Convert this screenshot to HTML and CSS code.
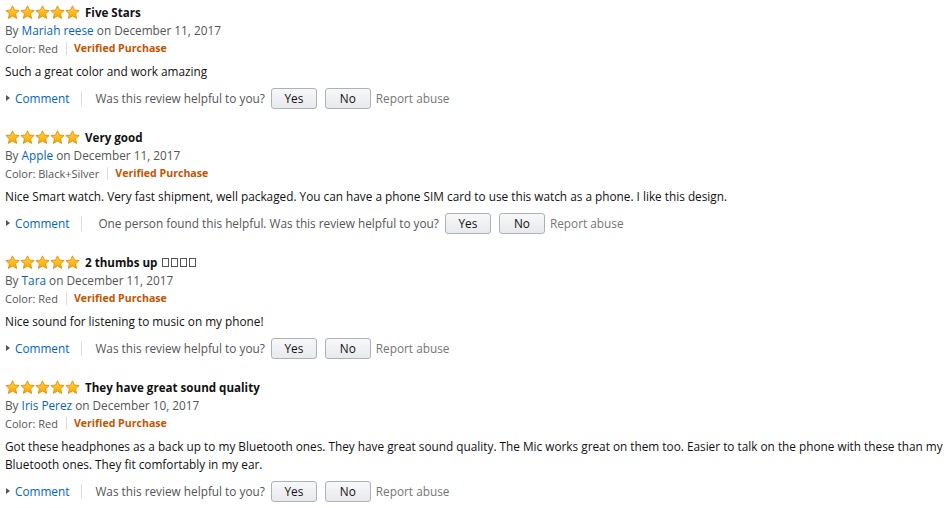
FILE: index.html
```html
<!DOCTYPE html>
<html>
<head>
<meta charset="utf-8">
<link rel="stylesheet" href="styles.css">
</head>
<body>
<svg width="0" height="0" class="defs">
  <defs>
    <linearGradient id="sg" x1="0" y1="0" x2="0" y2="1">
      <stop offset="0" stop-color="#ffd54a"/>
      <stop offset="1" stop-color="#f7a600"/>
    </linearGradient>
    <symbol id="star" viewBox="0 0 16 16">
      <path d="M8 0.9 L10.1 5.4 L15.1 5.9 L11.3 9.3 L12.4 14.3 L8 11.7 L3.6 14.3 L4.7 9.3 L0.9 5.9 L5.9 5.4 Z" fill="url(#sg)" stroke="#e28a00" stroke-width="0.9" stroke-linejoin="round"/>
    </symbol>
  </defs>
</svg>
<div class="reviews">

  <div class="review">
    <div class="title-row">
      <span class="stars"><svg><use href="#star"/></svg><svg><use href="#star"/></svg><svg><use href="#star"/></svg><svg><use href="#star"/></svg><svg><use href="#star"/></svg></span>
      <span class="title">Five Stars</span>
    </div>
    <div class="by">By <a class="link">Mariah reese</a> on December 11, 2017</div>
    <div class="meta"><span>Color: Red</span><span class="sep"></span><span class="verified">Verified Purchase</span></div>
    <div class="body">Such a great color and work amazing</div>
    <div class="actions">
      <span class="comment"><span class="tri"></span>Comment</span>
      <span class="sep tall"></span>
      <span class="helpful">Was this review helpful to you?</span>
      <span class="btn">Yes</span>
      <span class="btn">No</span>
      <span class="report">Report abuse</span>
    </div>
  </div>

  <div class="review">
    <div class="title-row">
      <span class="stars"><svg><use href="#star"/></svg><svg><use href="#star"/></svg><svg><use href="#star"/></svg><svg><use href="#star"/></svg><svg><use href="#star"/></svg></span>
      <span class="title">Very good</span>
    </div>
    <div class="by">By <a class="link">Apple</a> on December 11, 2017</div>
    <div class="meta"><span>Color: Black+Silver</span><span class="sep"></span><span class="verified">Verified Purchase</span></div>
    <div class="body">Nice Smart watch. Very fast shipment, well packaged. You can have a phone SIM card to use this watch as a phone. I like this design.</div>
    <div class="actions">
      <span class="comment"><span class="tri"></span>Comment</span>
      <span class="sep tall"></span>
      <span class="helpful wide">One person found this helpful. Was this review helpful to you?</span>
      <span class="btn">Yes</span>
      <span class="btn">No</span>
      <span class="report">Report abuse</span>
    </div>
  </div>

  <div class="review">
    <div class="title-row">
      <span class="stars"><svg><use href="#star"/></svg><svg><use href="#star"/></svg><svg><use href="#star"/></svg><svg><use href="#star"/></svg><svg><use href="#star"/></svg></span>
      <span class="title">2 thumbs up</span>
      <span class="boxes" aria-label="emoji"><i></i><i></i><i></i><i></i></span>
    </div>
    <div class="by">By <a class="link">Tara</a> on December 11, 2017</div>
    <div class="meta"><span>Color: Red</span><span class="sep"></span><span class="verified">Verified Purchase</span></div>
    <div class="body">Nice sound for listening to music on my phone!</div>
    <div class="actions">
      <span class="comment"><span class="tri"></span>Comment</span>
      <span class="sep tall"></span>
      <span class="helpful">Was this review helpful to you?</span>
      <span class="btn">Yes</span>
      <span class="btn">No</span>
      <span class="report">Report abuse</span>
    </div>
  </div>

  <div class="review">
    <div class="title-row">
      <span class="stars"><svg><use href="#star"/></svg><svg><use href="#star"/></svg><svg><use href="#star"/></svg><svg><use href="#star"/></svg><svg><use href="#star"/></svg></span>
      <span class="title">They have great sound quality</span>
    </div>
    <div class="by">By <a class="link">Iris Perez</a> on December 10, 2017</div>
    <div class="meta"><span>Color: Red</span><span class="sep"></span><span class="verified">Verified Purchase</span></div>
    <div class="body">Got these headphones as a back up to my Bluetooth ones. They have great sound quality. The Mic works great on them too. Easier to talk on the phone with these than my Bluetooth ones. They fit comfortably in my ear.</div>
    <div class="actions">
      <span class="comment"><span class="tri"></span>Comment</span>
      <span class="sep tall"></span>
      <span class="helpful">Was this review helpful to you?</span>
      <span class="btn">Yes</span>
      <span class="btn">No</span>
      <span class="report">Report abuse</span>
    </div>
  </div>

</div>
</body>
</html>
```
FILE: styles.css
```css
html, body {
  margin: 0;
  padding: 0;
  background: #fff;
}
body {
  font-family: "Open Sans", "Noto Sans", sans-serif;
  font-size: 11.8px;
  color: #111;
}
.defs {
  position: absolute;
  width: 0;
  height: 0;
}
.reviews {
  padding: 3px 0 0 5px;
  width: 940px;
}
.review {
  height: 125px;
}
.review:last-child {
  height: auto;
}
.title-row {
  display: flex;
  align-items: center;
  height: 18px;
}
.stars {
  display: flex;
  margin-right: 5px;
}
.stars svg {
  width: 15px;
  height: 15px;
  display: block;
}
.title {
  font-weight: 700;
  font-size: 11.6px;
  color: #111;
}
.boxes {
  display: flex;
  gap: 2px;
  margin-left: 5px;
  margin-top: 1px;
}
.boxes i {
  display: block;
  width: 5px;
  height: 7px;
  border: 1px solid #555;
}
.by {
  height: 18px;
  line-height: 18px;
  color: #555;
}
.link {
  color: #0066c0;
}
.meta {
  display: flex;
  align-items: center;
  height: 18px;
  font-size: 11px;
  color: #555;
}
.sep {
  display: inline-block;
  width: 1px;
  height: 13px;
  background: #ddd;
  margin: 0 7px 0 8px;
}
.verified {
  color: #c45500;
  font-weight: 700;
  font-size: 10.6px;
}
.body {
  margin-top: 5px;
  line-height: 18px;
  color: #111;
}
.actions {
  display: flex;
  align-items: center;
  margin-top: 7px;
  height: 22px;
}
.comment {
  display: flex;
  align-items: center;
  color: #0066c0;
}
.tri {
  width: 0;
  height: 0;
  border-left: 4px solid #555;
  border-top: 3px solid transparent;
  border-bottom: 3px solid transparent;
  margin: 0 5px 0 1px;
}
.sep.tall {
  height: 15px;
  margin: 0 13px 0 12px;
}
.helpful {
  color: #555;
  margin-right: 6px;
}
.helpful.wide {
  margin-left: 3px;
}
.btn {
  display: inline-flex;
  align-items: center;
  justify-content: center;
  width: 44px;
  height: 19px;
  border: 1px solid #adb1b8;
  border-radius: 3px;
  background: linear-gradient(#f7f8fa, #e7e9ec);
  color: #111;
  margin-right: 8px;
  font-size: 11.8px;
}
.btn + .btn {
  margin-right: 5px;
}
.report {
  color: #767676;
}
```
